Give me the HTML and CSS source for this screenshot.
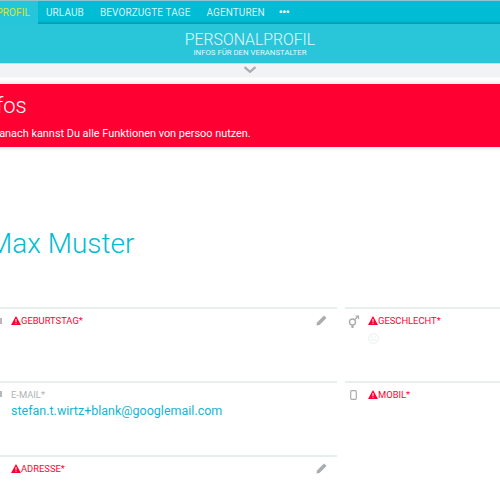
FILE: index.html
```html
<!DOCTYPE html>
<html lang="de">
<head>
<meta charset="utf-8">
<title>Personalprofil</title>
<link rel="stylesheet" href="styles.css">
</head>
<body>
<div class="page">
  <nav class="nav">
    <a class="tab active">PERSONALPROFIL</a>
    <a class="tab">URLAUB</a>
    <a class="tab">BEVORZUGTE TAGE</a>
    <a class="tab">AGENTUREN</a>
    <a class="tab dots">•••</a>
  </nav>
  <header class="head">
    <div class="head-title">PERSONALPROFIL</div>
    <div class="head-sub">INFOS FÜR DEN VERANSTALTER</div>
  </header>
  <div class="toggle">
    <svg width="14" height="8" viewBox="0 0 14 8"><path d="M1.5 1.2 7 5.8l5.5-4.6" fill="none" stroke="#a9adb0" stroke-width="2.4"/></svg>
  </div>
  <section class="alert">
    <h2 class="alert-title">Infos</h2>
    <p class="alert-text">Danach kannst Du alle Funktionen von persoo nutzen.</p>
  </section>
  <h1 class="name">Max Muster</h1>
  <div class="grid">
    <div class="field">
      <svg class="side clip" width="10" height="12" viewBox="0 0 10 12"><rect x="1" y="3" width="8" height="6" fill="#b5b9bb"/></svg>
      <div class="label err"><svg class="warn" width="10" height="9" viewBox="0 0 10 9"><path d="M5 0 10 9H0Z" fill="#ff0033"/><path d="M4.5 3h1v3h-1zM4.500 6.800h1v1h-1z" fill="#fff"/></svg>GEBURTSTAG*</div>
      <svg class="pen" width="11" height="11" viewBox="0 0 11 11"><path d="M8 .5 10.500 3 3.500 10 .5 10.500 1 7.500Z" fill="#a9adb0"/></svg>
    </div>
    <div class="field">
      <svg class="side" width="12" height="13" viewBox="0 0 12 13"><circle cx="4.500" cy="7" r="3" fill="none" stroke="#a9adb0" stroke-width="1.400"/><path d="M6.500 4.800 10 1.500M7.500 1.200h3v3M4.500 10v3M3 11.800h3" fill="none" stroke="#a9adb0" stroke-width="1.200"/></svg>
      <div class="label err"><svg class="warn" width="10" height="9" viewBox="0 0 10 9"><path d="M5 0 10 9H0Z" fill="#ff0033"/><path d="M4.500 3h1v3h-1zM4.500 6.800h1v1h-1z" fill="#fff"/></svg>GESCHLECHT*</div>
      <svg class="smile" width="11" height="11" viewBox="0 0 11 11"><circle cx="5.500" cy="5.500" r="4.800" fill="none" stroke="#e6efee"/><path d="M3 7h5M3 4h1.500M6.500 4H8" stroke="#e6efee"/></svg>
    </div>
    <div class="field">
      <svg class="side clip" width="10" height="12" viewBox="0 0 10 12"><rect x="1" y="2" width="8" height="6" fill="#b5b9bb"/></svg>
      <div class="label">E-MAIL*</div>
      <div class="value">stefan.t.wirtz+blank@googlemail.com</div>
    </div>
    <div class="field">
      <svg class="side phone" width="7" height="10" viewBox="0 0 7 10"><rect x=".7" y=".7" width="5.600" height="8.600" rx="1" fill="none" stroke="#a9adb0" stroke-width="1.200"/></svg>
      <div class="label err"><svg class="warn" width="10" height="9" viewBox="0 0 10 9"><path d="M5 0 10 9H0Z" fill="#ff0033"/><path d="M4.500 3h1v3h-1zM4.500 6.800h1v1h-1z" fill="#fff"/></svg>MOBIL*</div>
    </div>
    <div class="field">
      <div class="label err"><svg class="warn" width="10" height="9" viewBox="0 0 10 9"><path d="M5 0 10 9H0Z" fill="#ff0033"/><path d="M4.500 3h1v3h-1zM4.500 6.800h1v1h-1z" fill="#fff"/></svg>ADRESSE*</div>
      <svg class="pen" width="11" height="11" viewBox="0 0 11 11"><path d="M8 .5 10.500 3 3.500 10 .5 10.500 1 7.500Z" fill="#a9adb0"/></svg>
    </div>
  </div>
</div>
</body>
</html>
```

FILE: styles.css
```css
html, body {
  margin: 0;
  height: 100%;
  overflow: hidden;
  background: #fff;
}
.page {
  width: 640px;
  margin-left: -70px;
  font-family: Roboto, "Liberation Sans", sans-serif;
}
.nav {
  display: flex;
  height: 23px;
  background: #00bcd4;
  border-top: 1px solid #8fc5cc;
  box-shadow: inset 0 -3px 3px -2px rgba(0, 80, 95, .45);
}
.tab {
  display: block;
  padding: 0 8px;
  font-size: 10px;
  line-height: 23px;
  letter-spacing: .1px;
  color: #d6f3f7;
  white-space: nowrap;
}
.tab.active {
  flex: 0 0 108px;
  box-sizing: border-box;
  text-align: right;
  color: #d2e83e;
  background: #26c6da;
}
.dots {
  padding-left: 6px;
  font-size: 11px;
  letter-spacing: -.5px;
  font-weight: 700;
  color: #fff;
}
.head {
  height: 39px;
  background: #29c6da;
  border-bottom: 1px solid #b5e6ec;
  text-align: center;
  color: #e4f8fa;
}
.head-title {
  padding-top: 6px;
  font-size: 15.800px;
  font-weight: 300;
  line-height: 19px;
}
.head-sub {
  margin-top: -1px;
  font-size: 7.800px;
  line-height: 9px;
}
.toggle {
  display: flex;
  justify-content: center;
  align-items: flex-start;
  height: 14px;
  padding-top: 2px;
  box-sizing: border-box;
  background: #f1f3f4;
  border-bottom: 1px solid #f8f8f8;
}
.alert {
  margin-top: 6px;
  height: 63px;
  padding: 9px 0 0 70px;
  box-sizing: border-box;
  background: #ff0033;
  color: #fff;
  box-shadow: 0 0 6px rgba(0, 0, 0, .15);
}
.alert-title {
  margin: 0 0 0 -22px;
  font-size: 22px;
  line-height: 26px;
  font-weight: 300;
}
.alert-text {
  margin: 8px 0 0 -8px;
  font-size: 10.900px;
  line-height: 14px;
}
.name {
  margin: 80px 0 0 58px;
  height: 80px;
  font-size: 28px;
  line-height: 34px;
  font-weight: 300;
  color: #00bcd4;
}
.grid {
  display: grid;
  grid-template-columns: 349px 195px;
  column-gap: 8px;
  margin-left: 58px;
}
.field {
  position: relative;
  height: 66px;
  border-top: 2px solid #e8eded;
  padding: 6px 0 0 23px;
}
.label {
  font-size: 9.400px;
  line-height: 12px;
  color: #aeb3b6;
}
.label.err {
  color: #ff0033;
}
.warn {
  vertical-align: -1px;
}
.value {
  margin-top: 1px;
  font-size: 12.500px;
  line-height: 17px;
  color: #14b6cf;
}
.side {
  position: absolute;
  left: 3px;
  top: 6px;
}
.clip {
  left: 5px;
}
.phone {
  left: 5px;
  top: 7px;
}
.pen {
  position: absolute;
  right: 10px;
  top: 6px;
}
.smile {
  display: block;
  margin-top: 6px;
}
```
